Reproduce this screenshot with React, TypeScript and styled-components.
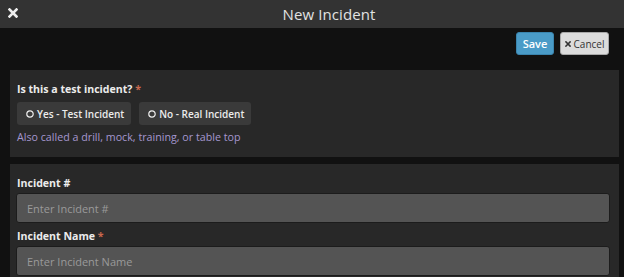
import styled, { createGlobalStyle } from 'styled-components'

const GlobalStyle = createGlobalStyle`
  html, body {
    margin: 0;
    padding: 0;
    background: #111111;
    font-family: "Open Sans", "Liberation Sans", sans-serif;
  }
`

function XIcon({ size = 10, color = '#eee' }: { size?: number; color?: string }) {
  return (
    <svg width={size} height={size} viewBox="0 0 10 10" style={{ flexShrink: 0 }}>
      <path d="M1.5 1.5 L8.5 8.5 M8.5 1.5 L1.5 8.5" stroke={color} strokeWidth="2.6" strokeLinecap="square" />
    </svg>
  )
}

function RadioIcon() {
  return (
    <svg width="8" height="8" viewBox="0 0 8 8" style={{ flexShrink: 0 }}>
      <circle cx="4" cy="4" r="3.2" fill="none" stroke="#eee" strokeWidth="1.2" />
    </svg>
  )
}

export default function App() {
  return (
    <>
      <GlobalStyle />
      <Page>
        <Header>
          <CloseButton>
            <XIcon />
          </CloseButton>
          <Title>New Incident</Title>
        </Header>
        <Toolbar>
          <SaveButton>Save</SaveButton>
          <CancelButton>
            <XIcon size={6} color="#333" />
            Cancel
          </CancelButton>
        </Toolbar>
        <Panel>
          <Label>
            Is this a test incident? <Required>*</Required>
          </Label>
          <Choices>
            <Choice>
              <RadioIcon />
              Yes - Test Incident
            </Choice>
            <Choice>
              <RadioIcon />
              No - Real Incident
            </Choice>
          </Choices>
          <Help>Also called a drill, mock, training, or table top</Help>
        </Panel>
        <Panel $gap={3}>
          <Label>Incident #</Label>
          <Input placeholder="Enter Incident #" />
          <Label>
            Incident Name <Required>*</Required>
          </Label>
          <Input placeholder="Enter Incident Name" />
        </Panel>
      </Page>
    </>
  )
}

const Page = styled.div`
  height: 277px;
  overflow: hidden;
  background: #111111;
`
const Header = styled.div`
  position: relative;
  height: 28px;
  background: #333333;
  display: flex;
  align-items: center;
  justify-content: center;
  padding-left: 34px;
`
const CloseButton = styled.div`
  position: absolute;
  left: 8px;
  top: 8px;
  display: flex;
`
const Title = styled.div`
  color: #e2e2e2;
  font-size: 15px;
  letter-spacing: 0.1px;
`
const Toolbar = styled.div`
  height: 42px;
  box-sizing: border-box;
  padding: 4px 15px 0 0;
  display: flex;
  justify-content: flex-end;
  align-items: flex-start;
  gap: 6px;
`
const BaseButton = styled.button`
  height: 23px;
  box-sizing: border-box;
  border-radius: 3px;
  font-family: inherit;
  font-size: 11px;
  display: flex;
  align-items: center;
  justify-content: center;
  gap: 3px;
  padding: 0;
  cursor: pointer;
`
const SaveButton = styled(BaseButton)`
  width: 38px;
  background: #4a9bc7;
  border: 1px solid #3a84ad;
  color: #fff;
  font-weight: 600;
`
const CancelButton = styled(BaseButton)`
  width: 49px;
  font-size: 10px;
  background: #dcdcdc;
  border: 1px solid #a8a8a8;
  color: #333;
`
const Panel = styled.div<{ $gap?: number }>`
  margin: 0 5px 7px 10px;
  background: #282828;
  padding: 12px 9px 12px 6px;
  display: flex;
  flex-direction: column;
  gap: ${({ $gap }) => $gap ?? 0}px;
`
const Label = styled.div`
  margin-left: 1px;
  color: #ececec;
  font-size: 10.6px;
  font-weight: 700;
  line-height: 14px;
`
const Required = styled.span`
  color: #c9674d;
`
const Choices = styled.div`
  display: flex;
  gap: 8px;
  margin: 6px 0 4px 1px;
`
const Choice = styled.div`
  height: 23px;
  box-sizing: border-box;
  padding: 0 7px 0 9px;
  border-radius: 3px;
  background: #3a3a3a;
  color: #ececec;
  font-size: 10px;
  font-weight: 600;
  display: flex;
  align-items: center;
  gap: 3px;
`
const Help = styled.div`
  margin-left: 1px;
  color: #a597cf;
  font-size: 10.7px;
  line-height: 16px;
`
const Input = styled.input`
  height: 30px;
  box-sizing: border-box;
  width: 100%;
  margin-bottom: 3px;
  background: #545454;
  border: 1px solid #1c1c1c;
  border-radius: 3px;
  padding: 0 10px;
  font-family: inherit;
  font-size: 11px;
  color: #eee;
  outline: none;
  &::placeholder {
    color: #9a9a9a;
  }
`
